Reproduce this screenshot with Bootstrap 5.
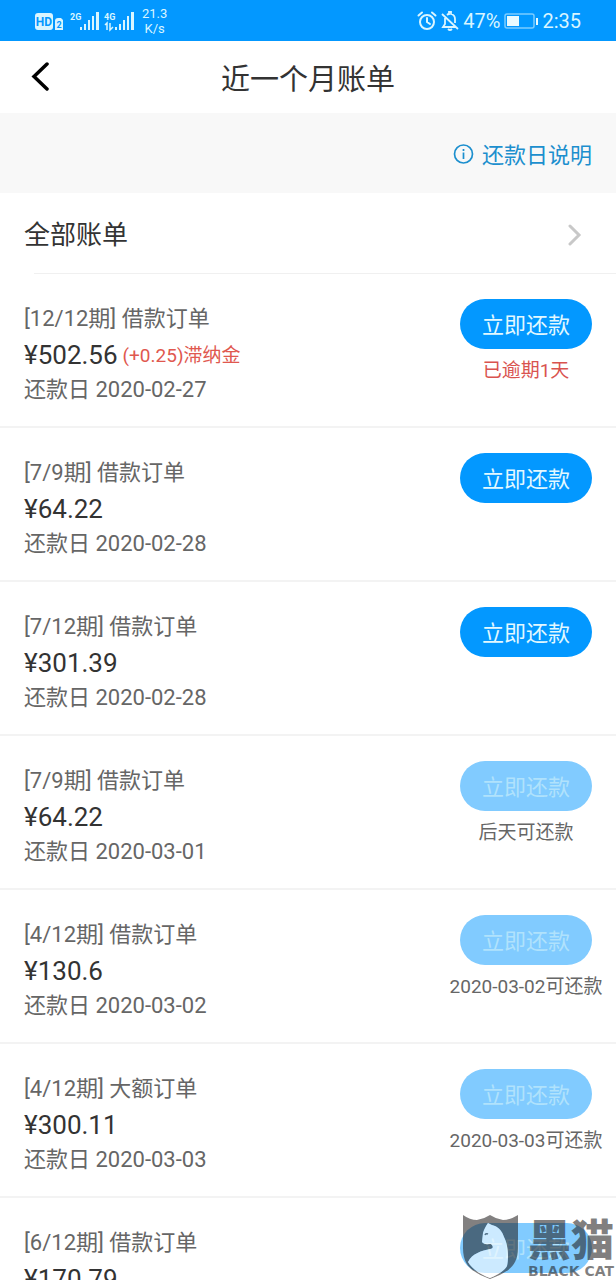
<!DOCTYPE html>
<html lang="zh-CN">
<head>
<meta charset="utf-8">
<meta name="viewport" content="width=device-width, initial-scale=1">
<title>近一个月账单</title>
<link href="https://cdn.jsdelivr.net/npm/bootstrap@5.3.0/dist/css/bootstrap.min.css" rel="stylesheet">
<style>
  body { font-family: Roboto, "Noto Sans CJK SC", sans-serif; color: #333; background: #fff; }
  .screen { height: 100vh; }
  .status { height: 41px; background: #0398ff; color: #d9f5ff; font-size: 20px; line-height: 24px; padding: 0 35px; }
  .speed { font-size: 13px; line-height: 15px; }
  .titlebar { height: 72px; padding: 0 24px; }
  .titlebar h1 { font-size: 29px; line-height: 40px; padding-top: 5px; }
  .side { width: 32px; }
  .back { border: 0; background: none; }
  .notice { height: 80px; background: #f8f8f8; font-size: 22px; padding: 4px 24px 0; }
  .notice a { color: #1c8fce; }
  .all-bills { height: 80px; font-size: 26px; color: #333; padding: 5px 34px 0 24px; }
  .rule { height: 1px; margin-left: 34px; background: #f0f0f0; }
  .bill { height: 154px; border-bottom: 2px solid #f3f3f3; }
  .bill-info { padding: 27px 0 0 24px; font-size: 22px; line-height: 36px; color: #666; }
  .amount { font-size: 26px; color: #333; }
  .fee { font-size: 19px; color: #e0584f; padding: 1px 0 0 5px; line-height: 35px; }
  .due { line-height: 34px; }
  .bill-action { width: 180px; padding-top: 25px; }
  .pay { width: 132px; height: 50px; padding: 4px 0 0; font-size: 22px; line-height: 32px;
    --bs-btn-color: #e2f8ff; --bs-btn-bg: #0398ff; --bs-btn-border-color: transparent;
    --bs-btn-hover-color: #fff; --bs-btn-hover-bg: #0089e8;
    --bs-btn-disabled-color: #b0e2fc; --bs-btn-disabled-bg: #81cbff; --bs-btn-disabled-opacity: 1;
    --bs-btn-disabled-border-color: transparent; }
  .note { font-size: 19px; line-height: 28px; margin-top: 8px; color: #666; }
  .late { color: #d9534f; }
  .stamp { right: 0; bottom: 0; width: 156px; height: 68px; color: rgba(32, 28, 28, .56); }
  .stamp-name { font-family: "Noto Sans CJK SC", sans-serif; font-weight: 900; font-size: 43px; line-height: 50px; }
  .stamp-sub { font-family: "DejaVu Sans", sans-serif; font-weight: 700; font-size: 14px; line-height: 18px; }
</style>
</head>
<body>
<div class="screen position-relative overflow-hidden">
  <header>
    <div class="status d-flex align-items-center justify-content-between">
      <div class="d-flex align-items-center gap-2">
        <svg width="99" height="28" viewBox="0 0 99 28" fill="currentColor" aria-label="信号">
          <rect x="0" y="6" width="18" height="17" rx="3"/>
          <text x="9" y="19" text-anchor="middle" font-family="Roboto" font-size="12" font-weight="700" fill="#0398ff">HD</text>
          <path d="M20 14q0-3 3-3h3l2 2v10h-8z"/>
          <text x="24" y="21" text-anchor="middle" font-family="Roboto" font-size="9" font-weight="700" fill="#0398ff">2</text>
          <text x="35" y="13" font-family="Roboto" font-size="9" font-weight="700">2G</text>
          <path d="M45 20h2v3h-2zM49 17h2v6h-2zM53 13h2v10h-2zM57 9h2v14h-2zM61 5h3v18h-3z"/>
          <text x="69" y="13" font-family="Roboto" font-size="9" font-weight="700">4G</text>
          <path d="M80 20h2v3h-2zM84 17h2v6h-2zM88 13h2v10h-2zM92 9h2v14h-2zM96 5h3v18h-3z"/>
          <path d="M70 18l2-2v7M75 16v7l3-3" fill="none" stroke="currentColor" stroke-width="1.500"/>
        </svg>
        <div class="speed text-center">21.3<br>K/s</div>
      </div>
      <div class="d-flex align-items-center gap-1">
        <svg width="20" height="20" viewBox="0 0 20 20" fill="none" stroke="currentColor" stroke-width="2" stroke-linecap="round" aria-label="闹钟"><circle cx="10" cy="11" r="7"/><path d="M10 7v4l3 2M1.500 4.500 5 1.500M18.500 4.500 15 1.500"/></svg>
        <svg width="18" height="20" viewBox="0 0 18 20" fill="none" stroke="currentColor" stroke-width="1.800" aria-label="静音"><path d="M6 4q1-1 2-1V1h2v2q4 1 4 5v4M4 7v6l-2 3h12M1 3l16 15M7 18q2 2 4 0"/></svg>
        <span>47%</span>
        <svg width="34" height="18" viewBox="0 0 34 18" aria-label="电量"><rect x="1" y="2" width="29" height="14" rx="2" fill="none" stroke="#7cccff" stroke-width="1.500"/><path d="M3 4h12v10H3zM32 6h2v7h-2z" fill="#e9faff"/></svg>
        <span>2:35</span>
      </div>
    </div>
    <nav class="titlebar d-flex align-items-center justify-content-between">
      <button class="back side p-0 text-center" type="button" aria-label="返回"><svg class="d-block mx-auto" width="20" height="30" viewBox="0 0 20 30" fill="none" stroke="#000" stroke-width="3.500" stroke-linecap="round"><path d="M17 2 4 14.500 17 27"/></svg></button>
      <h1 class="m-0 fw-normal">近一个月账单</h1>
      <span class="side"></span>
    </nav>
  </header>
  <div class="notice d-flex align-items-center justify-content-end">
    <a href="#" class="d-flex align-items-center gap-2 text-decoration-none">
      <svg width="21" height="22" viewBox="0 0 21 22" fill="none" stroke="currentColor" stroke-width="1.700"><circle cx="10.500" cy="10" r="9"/><path d="M10.500 8.500V15M10.500 5v2"/></svg>
      还款日说明</a>
  </div>
  <main>
    <a href="#" class="all-bills d-flex align-items-center justify-content-between text-decoration-none">
      全部账单
      <svg width="14" height="24" viewBox="0 0 14 24" fill="none" stroke="#c8c8c8" stroke-width="3" stroke-linecap="round"><path d="M2 2 11 11 2 20"/></svg>
    </a>
    <div class="rule"></div>

    <section class="bill d-flex justify-content-between">
      <div class="bill-info"><div>[12/12期] 借款订单</div><div class="d-flex"><span class="amount">¥502.56</span><span class="fee">(+0.25)滞纳金</span></div><div class="due">还款日 2020-02-27</div></div>
      <div class="bill-action text-center"><button type="button" class="btn pay rounded-pill">立即还款</button><div class="note late">已逾期1天</div></div>
    </section>
    <section class="bill d-flex justify-content-between">
      <div class="bill-info"><div>[7/9期] 借款订单</div><div class="amount">¥64.22</div><div class="due">还款日 2020-02-28</div></div>
      <div class="bill-action text-center"><button type="button" class="btn pay rounded-pill">立即还款</button></div>
    </section>
    <section class="bill d-flex justify-content-between">
      <div class="bill-info"><div>[7/12期] 借款订单</div><div class="amount">¥301.39</div><div class="due">还款日 2020-02-28</div></div>
      <div class="bill-action text-center"><button type="button" class="btn pay rounded-pill">立即还款</button></div>
    </section>
    <section class="bill d-flex justify-content-between">
      <div class="bill-info"><div>[7/9期] 借款订单</div><div class="amount">¥64.22</div><div class="due">还款日 2020-03-01</div></div>
      <div class="bill-action text-center"><button type="button" class="btn pay rounded-pill" disabled>立即还款</button><div class="note">后天可还款</div></div>
    </section>
    <section class="bill d-flex justify-content-between">
      <div class="bill-info"><div>[4/12期] 借款订单</div><div class="amount">¥130.6</div><div class="due">还款日 2020-03-02</div></div>
      <div class="bill-action text-center"><button type="button" class="btn pay rounded-pill" disabled>立即还款</button><div class="note">2020-03-02可还款</div></div>
    </section>
    <section class="bill d-flex justify-content-between">
      <div class="bill-info"><div>[4/12期] 大额订单</div><div class="amount">¥300.11</div><div class="due">还款日 2020-03-03</div></div>
      <div class="bill-action text-center"><button type="button" class="btn pay rounded-pill" disabled>立即还款</button><div class="note">2020-03-03可还款</div></div>
    </section>
    <section class="bill d-flex justify-content-between">
      <div class="bill-info"><div>[6/12期] 借款订单</div><div class="amount">¥170.79</div></div>
      <div class="bill-action text-center"><button type="button" class="btn pay rounded-pill" disabled>立即还款</button></div>
    </section>
  </main>

  <div class="stamp position-absolute d-flex gap-2 pe-none">
    <svg class="flex-shrink-0" width="60" height="68" viewBox="0 0 60 68" aria-label="黑猫">
      <path fill-rule="evenodd" fill="currentColor" d="M3 3q7 5 14 5 7-1 13-5 6 4 13 5 7 0 15-5v33c0 20-13 25-28 31C15 61 3 56 3 36zM28 11c-2 3-4 6-5 10l-1 9c2 3 6 2 9 2 2 2 3 4-1 5-8 2-18 4-22 13 4 7 13 13 22 16 8-3 15-8 17-12 2-8 1-22-3-29-2-6-5-9-9-11q-4-1-7-3z"/>
      <path d="M28 11c-2 3-4 6-5 10l-1 9c2 3 6 2 9 2 2 2 3 4-1 5-8 2-18 4-22 13 4 7 13 13 22 16 8-3 15-8 17-12 2-8 1-22-3-29-2-6-5-9-9-11q-4-1-7-3z" fill="#fff" fill-opacity=".6"/>
      <path d="M25 23q1-2 3-1" fill="none" stroke="#55758d" stroke-width="1.500"/>
    </svg>
    <div class="text-nowrap"><div class="stamp-name">黑猫</div><div class="stamp-sub">BLACK CAT</div></div>
  </div>
</div>
<script src="https://cdn.jsdelivr.net/npm/bootstrap@5.3.0/dist/js/bootstrap.bundle.min.js"></script>
</body>
</html>
